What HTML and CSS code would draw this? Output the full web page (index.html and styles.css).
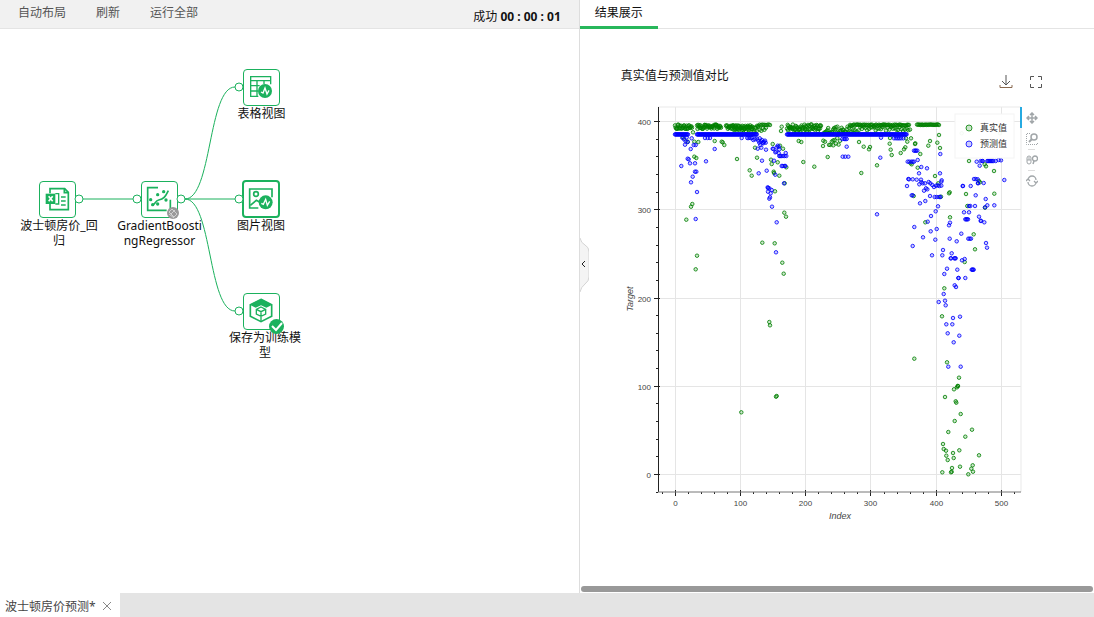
FILE: index.html
```html
<!DOCTYPE html>
<html lang="zh-CN">
<head>
<meta charset="utf-8">
<meta name="viewport" content="width=device-width, initial-scale=1">
<title>波士顿房价预测</title>
<link rel="stylesheet" href="styles.css">
</head>
<body>
<div class="app">
  <main class="workspace">
    <section class="flow">
      <header class="toolbar">
        <nav class="actions">
          <button type="button">自动布局</button>
          <button type="button">刷新</button>
          <button type="button">运行全部</button>
        </nav>
        <p class="status">成功 <strong>00 : 00 : 01</strong></p>
      </header>
      <div class="canvas">
        <div class="node node-data">
          <button type="button" class="tile" aria-label="波士顿房价_回归">
            <svg width="35" height="35" viewBox="3 3 105 105" fill="none" stroke="currentColor" stroke-width="5">
              <path d="M33 37V23H77L88 34V86H33V69"/><path d="M76 22V35H88"/>
              <path d="M49 38H59V69H49M66 48H80M66 60H80M66 72H80" stroke-width="4"/>
              <rect x="20" y="38" width="29" height="31" fill="currentColor" stroke="none"/>
              <path d="M29 46L41 61M41 46L29 61" stroke="#fff"/>
            </svg>
          </button>
          <span class="label">波士顿房价_回归</span>
        </div>
        <div class="node node-model">
          <button type="button" class="tile" aria-label="GradientBoostingRegressor">
            <svg width="35" height="35" viewBox="3 3 105 105" fill="none" stroke="currentColor" stroke-width="5">
              <path d="M51 20H20V88H77M88 56V84"/>
              <path d="M33 72C43 72 42 59 53 57C68 54 72 49 82 29"/>
              <g fill="currentColor" stroke="none"><circle cx="50" cy="41" r="5"/><circle cx="68" cy="32" r="5"/><circle cx="29" cy="56" r="5"/><circle cx="50" cy="69" r="5"/><circle cx="75" cy="57" r="5"/><circle cx="35" cy="71" r="5"/></g>
            </svg>
          </button>
          <span class="label">GradientBoostingRegressor</span>
        </div>
        <div class="node node-table">
          <button type="button" class="tile" aria-label="表格视图">
            <svg width="35" height="35" viewBox="3 3 105 105" fill="none" stroke="currentColor" stroke-width="4">
              <path d="M83 46V23H23V82H46M23 35H83M42 35V82M63 35V45M23 50H50M23 66H45"/>
              <circle cx="66" cy="66" r="21" fill="currentColor" stroke="none"/>
              <path d="M54 69L60 72L66 57L72 75L78 64" stroke="#fff"/>
            </svg>
          </button>
          <span class="label">表格视图</span>
        </div>
        <div class="node node-image">
          <button type="button" class="tile selected" aria-label="图片视图">
            <svg width="34" height="34" viewBox="6 6 102 102" fill="none" stroke="currentColor" stroke-width="5">
              <path d="M90 52V27H23V84H49"/><circle cx="42" cy="42" r="7"/><path d="M25 76L43 61L53 66"/>
              <circle cx="71" cy="67" r="21" fill="currentColor" stroke="none"/>
              <path d="M58 70L64 73L71 58L76 76L83 64" stroke="#fff" stroke-width="4"/>
            </svg>
          </button>
          <span class="label">图片视图</span>
        </div>
        <div class="node node-save">
          <button type="button" class="tile" aria-label="保存为训练模型">
            <svg width="35" height="35" viewBox="3 3 105 105" fill="none" stroke="currentColor" stroke-width="5">
              <path d="M54 19L86 35V70L54 86L22 70V35Z"/>
              <path d="M54 18L88 35L70 44L54 37L38 44L20 35Z" fill="currentColor" stroke="none"/>
              <path d="M54 42L68 49V63L54 70L40 63V49ZM40 49L54 56L68 49M54 56V85" stroke-width="4"/>
            </svg>
          </button>
          <span class="label">保存为训练模型</span>
        </div>
        <svg class="wires" width="320" height="360" viewBox="0 29 320 360" aria-hidden="true">
          <g class="wire"><path d="M83 199H133"/><path d="M185 199H235"/><path d="M185 199C212 199 208 87 235 87"/><path d="M185 199C212 199 208 311 235 311"/></g>
          <g class="port"><circle cx="79" cy="199" r="4"/><circle cx="137" cy="199" r="4"/><circle cx="181" cy="199" r="4"/><circle cx="239" cy="87" r="4"/><circle cx="239" cy="199" r="4"/><circle cx="239" cy="311" r="4"/></g>
          <circle cx="173" cy="213" r="6" fill="#999"/>
          <path d="M169 212L172 209L177 214L174 217ZM171 214L175 210M169 214L174 218" fill="none" stroke="#ddd" stroke-width=".8"/>
          <circle cx="276.500" cy="326.500" r="7.500" fill="#1bb15d"/>
          <path d="M272 326L276 330L282 323" fill="none" stroke="#fff" stroke-width="2"/>
        </svg>
      </div>
    </section>

    <section class="results">
      <button type="button" class="collapse" aria-label="收起">
        <svg width="9" height="56" viewBox="0 0 9 56"><path class="grip" d="M0 1Q1 6 5 8Q9 10 9 15V40Q9 44 5 47Q1 50 0 55"/><path class="chevron" d="M5 24L2 27L5 30"/></svg>
      </button>
      <header class="tabs"><button type="button" class="tab">结果展示</button></header>
      <div class="report">
        <div class="report-head">
          <h2>真实值与预测值对比</h2>
          <div class="report-tools">
            <button type="button" aria-label="下载"><svg width="14" height="14" viewBox="0 0 14 14"><path d="M7 0V10M3 6L7 10L11 6"/><path d="M1 10V12.500H13V10" stroke="#8a6a50"/></svg></button>
            <button type="button" aria-label="全屏"><svg width="14" height="14" viewBox="0 0 14 14"><path d="M1.500 5V1.500H5M9 1.500H12.500V5M12.500 9V12.500H9M5 12.500H1.500V9"/></svg></button>
          </div>
        </div>
        <div class="figure">
          <svg class="plot" width="401" height="425" viewBox="621 100 401 425" role="img" aria-label="真实值与预测值散点图">
            <g id="grid" class="grid"></g>
            <path class="outline" d="M658 107H1021V492"/>
            <g id="points"></g>
            <g id="axes" class="axes"></g>
            <path class="axis-y" d="M658.500 107V492"/>
            <path class="axis-x" d="M658 492H1021"/>
            <text class="axis-name" x="840" y="519">Index</text>
            <text class="axis-name" transform="translate(633 299) rotate(-90)">Target</text>
            <g class="legend">
              <rect x="955" y="114" width="59" height="44"/>
              <circle class="real" cx="969" cy="128" r="3"/><text x="980" y="131">真实值</text>
              <circle class="pred" cx="969" cy="144" r="3"/><text x="980" y="147">预测值</text>
            </g>
          </svg>
          <div class="plot-tools">
            <button type="button" class="active" aria-label="平移"><svg width="12" height="12" viewBox="0 0 12 12"><path d="M6 1V11M1 6H11M4 3L6 1L8 3M4 9L6 11L8 9M3 4L1 6L3 8M9 4L11 6L9 8" stroke-width="1.500"/></svg></button>
            <button type="button" class="ruled" aria-label="框选缩放"><svg width="12" height="12" viewBox="0 0 12 12"><path d="M4 .5H.5V11.500H11.500V9" stroke-dasharray="1 1"/><circle cx="8" cy="4" r="3" stroke-width="1.500"/><path d="M6 6L3 9" stroke-width="2"/></svg></button>
            <button type="button" class="ruled" aria-label="滚轮缩放"><svg width="12" height="12" viewBox="0 0 12 12"><rect x="1" y="2" width="4" height="8" rx="2"/><path d="M3 3V6M1 6H5"/><circle cx="9" cy="4.500" r="2.500" stroke-width="1.300"/><path d="M8 7L7 10" stroke-width="1.500"/></svg></button>
            <button type="button" aria-label="重置"><svg width="12" height="12" viewBox="0 0 12 12"><path d="M2 5A4 4 0 0 1 10 5M10 7A4 4 0 0 1 2 7M0 6L2 4L4 6M8 6L10 8L12 6" stroke-width="1.300"/></svg></button>
          </div>
        </div>
      </div>
      <div class="scrollbar"></div>
    </section>
  </main>
  <footer class="files">
    <div class="file"><span>波士顿房价预测*</span>
      <button type="button" aria-label="关闭"><svg width="10" height="10" viewBox="0 0 10 10"><path d="M1 1L9 9M9 1L1 9"/></svg></button>
    </div>
  </footer>
</div>
<script src="plot.js"></script>
</body>
</html>
```

FILE: styles.css
```css
* { box-sizing: border-box; }
body {
  margin: 0;
  font: 12px/15px "Noto Sans", "Noto Sans CJK SC", sans-serif;
  color: #111;
  background: #fff;
}
button { margin: 0; padding: 0; border: 0; background: none; font: inherit; color: inherit; }
button svg { display: block; }
h2, p { margin: 0; font-size: 12px; font-weight: 400; }
.app { display: flex; flex-direction: column; min-height: 100vh; }
.workspace { display: flex; flex: 1; }
.flow { flex: 0 0 53%; min-width: 0; border-right: 1px solid #ddd; }
.toolbar {
  display: flex; justify-content: space-between;
  height: 29px; padding: 0 18px;
  background: #f1f1f1; border-bottom: 1px solid #e4e4e4;
}
.actions { display: flex; gap: 30px; height: 25px; color: #555; }
.status { padding-top: 9px; }
.canvas { position: relative; min-height: 400px; }

.node { position: absolute; width: 85px; display: flex; flex-direction: column; align-items: center; }
.node-data { left: 15px; top: 152px; }
.node-model { left: 117px; top: 152px; }
.node-table { left: 219px; top: 40px; }
.node-image { left: 218px; top: 151px; width: 86px; }
.node-save { left: 219px; top: 264px; }
.tile {
  display: grid; place-items: center;
  width: 37px; height: 37px;
  border: 1px solid #1bb15d; border-radius: 4px;
  background: #fff; color: #1bb15d;
}
.tile.selected { width: 38px; height: 38px; border-width: 2px; }
.label { width: 86px; text-align: center; word-break: break-all; }
.node-save .label, .node-data .label { width: 80px; }
.node-data .label { margin-left: 3px; }
.node-save .label { margin-left: 7px; }
.wires { position: absolute; left: 0; top: 0; pointer-events: none; }
.wire { fill: none; stroke: #1bb15d; }
.port { fill: #fff; stroke: #1bb15d; }

.results { position: relative; flex: 1; min-width: 0; display: flex; flex-direction: column; }
.tabs { height: 29px; border-bottom: 1px solid #e4e4e4; }
.tab { height: 29px; width: 78px; padding-bottom: 1px; border-bottom: 3px solid #28b75b; }
.collapse { position: absolute; left: 0; top: 237px; }
.grip { fill: #f4f4f4; stroke: #d4d4d4; }
.chevron { fill: none; stroke: #222; }
.report { flex: 1; padding: 38px 40px 0 41px; }
.report-head { display: flex; justify-content: space-between; max-width: 422px; height: 33px; }
.report-head h2 { padding-top: 1px; }
.report-tools { display: flex; align-items: flex-start; gap: 16px; padding-top: 8px; }
.report-tools svg { fill: none; stroke: #555; }
.figure { display: flex; }
.plot { flex: none; }
.plot-tools { display: flex; flex-direction: column; padding-top: 7px; }
.plot-tools button {
  display: grid; place-items: center; position: relative;
  width: 22px; height: 21px; margin-left: -2px;
  border-left: 2px solid transparent;
}
.plot-tools .active { border-left-color: #26aae1; }
.plot-tools .ruled::after { content: ""; position: absolute; left: 6px; bottom: -1px; width: 7px; height: 1px; background: #ddd; }
.plot-tools svg { fill: none; stroke: #a1a6a9; }
.grid { stroke: #e5e5e5; }
.outline { fill: none; stroke: #e9e9e9; }
.axes line { stroke: #222; }
.axis-y { stroke: #222; }
.axis-x { stroke: #777; }
.axes text { font: 8px "Liberation Sans", sans-serif; fill: #444; }
.axis-name { font: italic 9px "Liberation Sans", sans-serif; text-anchor: middle; fill: #444; }
.real { fill: rgba(0, 128, 0, .2); stroke: rgba(0, 128, 0, .8); }
.pred { fill: rgba(0, 0, 255, .2); stroke: rgba(0, 0, 255, .8); }
.legend rect { fill: rgba(255, 255, 255, .95); stroke: #f4f4f4; }
.legend text { font: 9px "Noto Sans CJK SC", sans-serif; fill: #333; }
.scrollbar { height: 6px; margin: 0 1px 1px; border-radius: 3px; background: #999; }

.files { display: flex; height: 24px; background: #e4e4e4; }
.file { display: flex; align-items: center; gap: 6px; width: 120px; padding: 2px 5px 0; background: #fff; color: #444; }
.file svg { fill: none; stroke: #888; }
```

FILE: plot.js
```js
const NS = "http://www.w3.org/2000/svg";

function add(parent, tag, attrs, text) {
  const el = document.createElementNS(NS, tag);
  for (const key in attrs) el.setAttribute(key, attrs[key]);
  if (text !== undefined) el.textContent = text;
  parent.appendChild(el);
}

const grid = document.getElementById("grid");
const axes = document.getElementById("axes");
const points = document.getElementById("points");
const xAt = v => 675.2 + v * 0.6525;
const yAt = v => 474.5 - v * 0.8825;

for (let v = -20; v <= 520; v += 20) {
  const x = Math.floor(xAt(v)) + 0.5;
  const major = v % 100 === 0;
  if (major) {
    add(grid, "line", { x1: x, x2: x, y1: 107, y2: 492 });
    add(axes, "text", { x: x, y: 506, "text-anchor": "middle" }, v);
  }
  add(axes, "line", { x1: x, x2: x, y1: major ? 490 : 492, y2: major ? 496 : 494 });
}
for (let v = -20; v <= 400; v += 20) {
  const y = Math.floor(yAt(v)) + 0.5;
  const major = v % 100 === 0;
  if (major) {
    add(grid, "line", { x1: 658, x2: 1021, y1: y, y2: y });
    add(axes, "text", { x: 651, y: y + 3, "text-anchor": "end" }, v);
  }
  add(axes, "line", { x1: major ? 654 : 656, x2: major ? 660 : 658, y1: y, y2: y });
}

function dot(cls, x, y) {
  add(points, "circle", { class: cls, cx: x.toFixed(1), cy: y.toFixed(1), r: 1.75 });
}

let seed = 4242421;
function random() {
  seed = (seed * 16807) % 2147483647;
  return seed / 2147483647;
}

/* Dense runs: [first x, last x, top y, bottom y, count] */
const realRuns = [
  [675, 692, 124.5, 129, 30], [697, 721, 124.5, 129, 46], [726, 752, 125, 129, 44],
  [732, 756, 127, 132, 18], [757, 770, 124.5, 126, 11], [752, 766, 126, 133, 10],
  [787, 821, 124.5, 130, 48], [788, 820, 128, 133, 16],
  [824, 850, 126, 134, 32], [829, 840, 138, 146, 9],
  [850, 909, 124.5, 126, 62], [850, 910, 126, 132, 36], [917, 939, 124.5, 125, 24]
];
for (const [x1, x2, y1, y2, n] of realRuns) {
  for (let i = 0; i < n; i++) dot("real", x1 + (x2 - x1) * i / (n - 1), y1 + (y2 - y1) * random());
}

/* Samples in thirds of a unit from the block origin, as x,y pairs */
const blocks = [
  { x: 650, y: 100,
    real: "129,97 133,170 139,174 127,312 123,320 109,359 133,125 145,126 194,123 215,125 218,127 223,135 261,177 299,211 305,227 315,143 321,173 363,179 365,192 371,215 372,219 375,274 383,187 388,227 393,93 395,80 399,146 409,202 403,338 408,350 404,250 446,123 454,126 460,186 493,200 533,171 519,138 520,122 525,125 550,136 390,137 368,132 100,113 113,125 141,467 137,508 337,428 374,430 397,488 401,521 358,666 360,676",
    pred: "94,198 105,134 107,124 113,126 122,147 131,135 137,135 113,176 116,178 120,190 135,190 135,215 139,215 128,230 123,247 141,276 137,357 97,113 102,118 110,112 125,115 168,184 194,147 165,114 173,114 180,114 275,114 292,114 296,114 301,114 305,114 310,120 315,118 321,116 325,122 329,115 323,146 326,220 336,182 350,212 348,149 331,135 334,143 328,128 333,124 338,128 342,126 345,122 347,128 340,130 336,120 372,182 370,147 368,146 376,157 380,142 383,137 386,140 388,148 376,224 379,155 388,168 391,168 394,168 399,168 404,168 409,168 386,159 407,159 395,198 398,198 404,198 406,198 402,250 353,262 354,264 358,265 365,270 354,275 362,280 360,292 358,296 366,320 380,367 378,457 577,117 583,117 586,117 590,117 590,140 578,170 586,170 595,170" },
  { x: 850, y: 100,
    real: "27,126 41,140 57,148 60,141 81,196 34,219 120,114 119,131 122,149 125,165 152,159 162,148 166,142 168,115 172,125 183,115 196,130 195,132 211,162 235,137 240,123 262,128 267,105 270,144 203,203 182,190 185,193 191,288 255,228 265,250 273,290 297,280 299,277 300,352 357,183 408,199 432,213 433,281 348,282 352,318 405,323 387,243 390,247 404,193 335,100 450,100 226,367 371,403 375,448 344,486 283,565 276,649",
    pred: "91,173 93,113 132,115 138,115 143,115 148,115 153,115 160,115 192,152 196,152 198,152 202,152 271,162 173,185 178,185 184,185 188,185 192,185 203,180 214,201 231,205 207,220 270,220 175,237 177,238 188,238 171,258 200,239 213,239 208,253 214,247 218,250 225,250 236,246 241,250 247,255 252,261 258,257 263,256 268,258 274,257 275,241 274,245 222,272 228,265 232,268 185,286 188,286 240,288 254,291 260,291 268,291 271,291 226,303 210,310 264,319 257,334 243,348 338,258 339,258 362,258 401,249 384,249 384,250 372,237 377,237 383,238 377,286 407,297 463,240 380,185 389,197 392,183 398,183 397,183 412,183 415,183 418,183 421,183 424,183 427,183 430,183 437,183 446,180 453,181 357,318 361,318 375,318 405,322 412,316 433,316 342,337 357,337 387,350 81,343 233,365 300,368 297,376 193,381 242,394 260,387 219,412 256,419 299,416 320,424 334,401 355,416 359,416 363,416 408,429 411,443 188,438 279,450 277,466 246,466 305,460 302,475 303,475 313,475 315,475 317,475 336,481 344,477 322,509 291,506 283,522 365,509 367,509 369,509 371,509 325,534 326,534 346,534 314,556 318,561 281,582 285,602 287,616 266,606 309,654 330,650 289,673 307,673 293,700 328,707 311,727 346,358 349,358 351,358 354,358 392,362 393,363 403,367 295,800 332,800" },
  { x: 850, y: 340,
    real: "193,56 291,67 327,113 324,138 323,138 321,142 312,148 285,171 317,184 319,188 332,222 314,243 295,276 366,269 346,290 279,312 281,327 288,332 289,347 293,360 309,339 311,354 328,331 387,346 330,380 306,384 305,395 303,397 277,397 368,376 364,386 369,395 355,403",
    pred: "" },
  { x: 610, y: 380, real: "394,97 498,50 500,48", pred: "" }
];
for (const block of blocks) {
  for (const cls of ["real", "pred"]) {
    for (const pair of block[cls].split(" ").filter(Boolean)) {
      const [x, y] = pair.split(",").map(Number);
      dot(cls, block.x + x / 3, block.y + y / 3);
    }
  }
}

/* Capped predictions */
for (const [x1, x2] of [[675, 688], [697, 757], [787, 907]]) {
  for (let x = x1; x <= x2; x += 0.65) dot("pred", x, 134.4);
}
```
